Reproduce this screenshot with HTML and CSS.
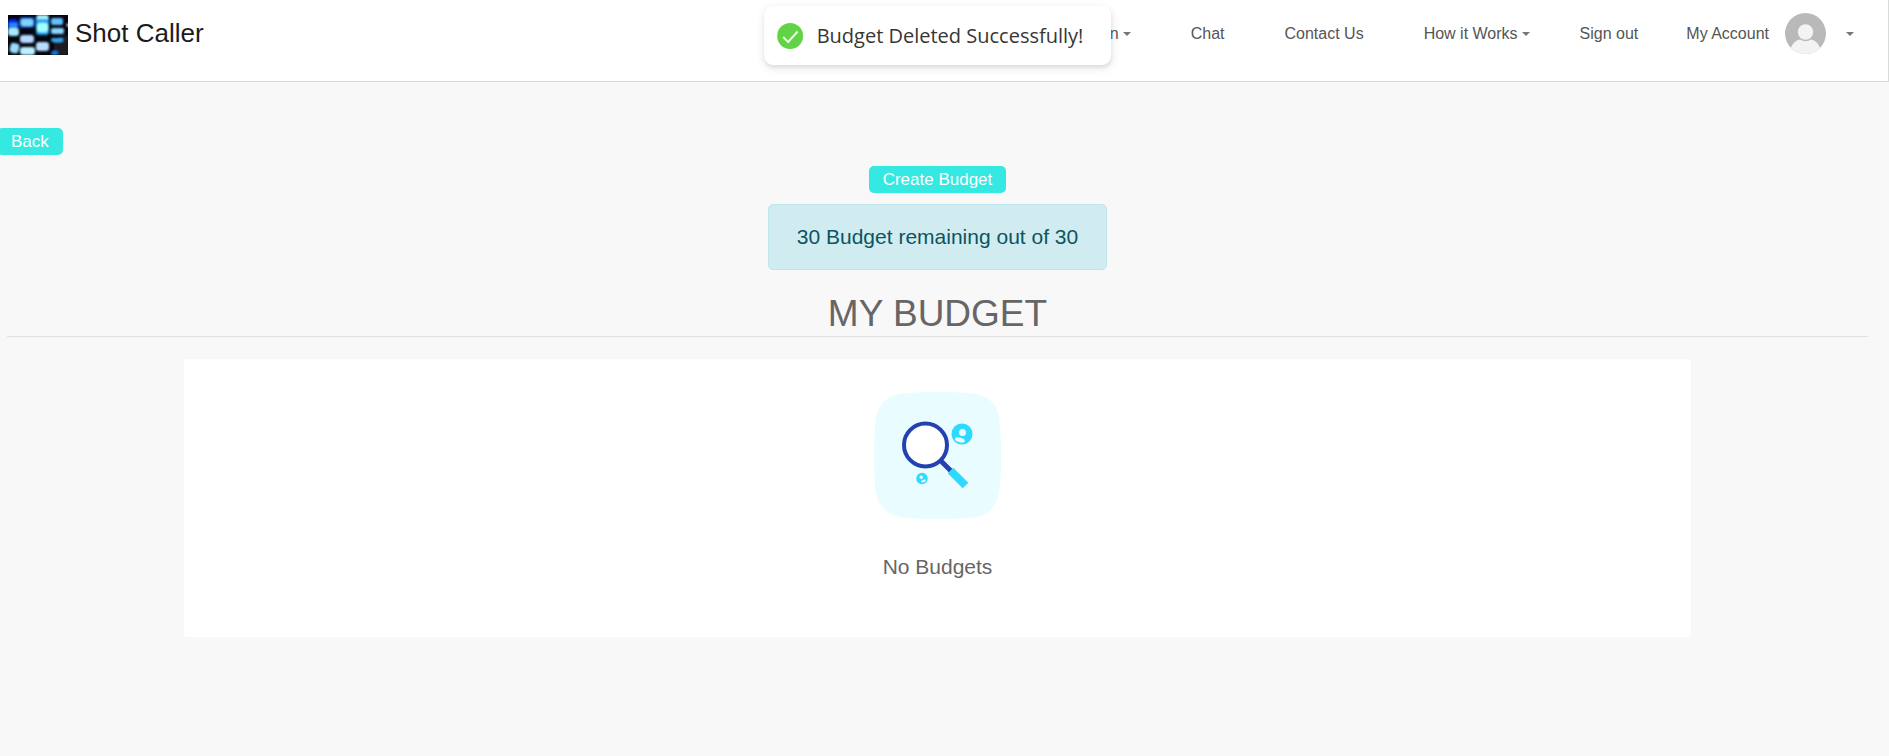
FILE: index.html
```html
<!DOCTYPE html>
<html lang="en">
<head>
<meta charset="utf-8">
<meta name="viewport" content="width=device-width, initial-scale=1">
<title>Shot Caller - My Budget</title>
<link rel="stylesheet" href="styles.css">
</head>
<body>
<header class="navbar">
  <a class="brand" href="#">
    <svg class="brand-logo" viewBox="0 0 60 40" aria-hidden="true">
      <defs><filter id="glow" x="-20%" y="-20%" width="140%" height="140%"><feGaussianBlur stdDeviation="0.9"/></filter></defs>
      <rect width="60" height="40" fill="#03060f"/>
      <g filter="url(#glow)">
        <path d="M46 24l14-4v20H46z" fill="#1c1c24"/>
        <rect x="11" y="2" width="16" height="11" rx="3" fill="#0646b8"/>
        <rect x="0" y="4" width="10" height="12" rx="4" fill="#0a20ee"/>
        <rect x="1" y="8" width="9" height="4" fill="#1d8dff"/>
        <rect x="0" y="13" width="11" height="8" rx="3" fill="#a6ecff"/>
        <rect x="13" y="4" width="12" height="7" rx="2" fill="#7fd4ff"/>
        <rect x="28" y="0" width="13" height="20" rx="3" fill="#1ca6f4"/>
        <rect x="29" y="0" width="11" height="4" fill="#a9f3ff"/>
        <rect x="29" y="8" width="11" height="9" rx="3" fill="#a5ffff"/>
        <rect x="43" y="3" width="12" height="7" rx="2" fill="#62bfff"/>
        <rect x="43" y="13" width="13" height="6" rx="2" fill="#8bd6ff"/>
        <rect x="12" y="20" width="14" height="8" rx="3" fill="#b5d8ff"/>
        <rect x="43" y="23" width="12" height="4" rx="2" fill="#35a8f5"/>
        <rect x="28" y="27" width="13" height="9" rx="3" fill="#b9ddff"/>
        <rect x="2" y="28" width="9" height="10" rx="3" fill="#9bdcff" transform="rotate(12 6 33)"/>
        <rect x="12" y="32" width="15" height="8" rx="3" fill="#bdefff"/>
        <rect x="43" y="36" width="7" height="4" rx="2" fill="#1679e8"/>
        <circle cx="60" cy="10" r="1.5" fill="#fff"/>
      </g>
    </svg>
    <span>Shot Caller</span>
  </a>
  <nav class="menu" aria-label="Main">
    <button class="menu-link caret" type="button">n</button>
    <a class="menu-link" href="#">Chat</a>
    <a class="menu-link" href="#">Contact Us</a>
    <button class="menu-link caret" type="button">How it Works</button>
    <a class="menu-link gap-sign" href="#">Sign out</a>
    <button class="menu-link account caret" type="button">
      <span>My Account</span>
      <svg class="avatar" viewBox="0 0 41 41" aria-hidden="true">
        <defs><clipPath id="disc"><circle cx="20.5" cy="20.5" r="20.5"/></clipPath></defs>
        <g clip-path="url(#disc)">
          <rect width="41" height="41" fill="#b9b9b9"/>
          <path d="M4 41C6 32 10 27 15 26.500Q20.500 30 26 26.500C31 27 35 32 37 41z" fill="#f3f3f3"/>
          <circle cx="20.500" cy="19" r="7.700" fill="#f3f3f3"/>
        </g>
      </svg>
    </button>
  </nav>
</header>

<div class="toast" role="status">
  <svg class="toast-icon" viewBox="0 0 26 26" aria-hidden="true">
    <circle cx="13" cy="13" r="13" fill="#61d345"/>
    <path d="M6 14l5 5 9.500-10.500" fill="none" stroke="#e8fbe3" stroke-width="2"/>
  </svg>
  <span>Budget Deleted Successfully!</span>
</div>

<main class="page">
  <button class="btn btn-back" type="button">Back</button>
  <div class="summary">
    <button class="btn" type="button">Create Budget</button>
    <p class="alert">30 Budget remaining out of 30</p>
    <h1 class="title">MY BUDGET</h1>
    <section class="card">
      <svg class="empty-icon" viewBox="0 0 127 127" aria-hidden="true">
        <path d="M33 1Q63.500-1 94 1Q125 2 126 33Q128 63.500 126 94Q124 125 94 126Q63.500 128 33 126Q3 124 1 94Q-1 63.500 1 33Q3 2 33 1z" fill="#e9fcff"/>
        <path d="M66 68l12 12" stroke="#2341b0" stroke-width="5"/>
        <path d="M76.500 78.500l15 15" stroke="#2cd9ff" stroke-width="8"/>
        <circle cx="51.500" cy="53" r="21.500" fill="#fff" stroke="#2341b0" stroke-width="4"/>
        <circle cx="88" cy="42" r="10.500" fill="#2cd9ff"/>
        <circle cx="88.500" cy="40.500" r="3.500" fill="#e9fcff"/>
        <ellipse cx="86" cy="48" rx="5" ry="2.300" transform="rotate(15 86 48)" fill="#e9fcff"/>
        <circle cx="48" cy="86.500" r="5.700" fill="#2cd9ff"/>
        <circle cx="47.300" cy="85.300" r="1.700" fill="#e9fcff"/>
        <ellipse cx="49.500" cy="89" rx="2.500" ry="1.200" transform="rotate(-20 49.500 89)" fill="#e9fcff"/>
      </svg>
      <p class="empty-text">No Budgets</p>
    </section>
  </div>
</main>
</body>
</html>
```
FILE: styles.css
```css
* { box-sizing: border-box; }

body {
  margin: 0;
  background: #f8f8f8;
  color: #666;
  font-family: "Liberation Sans", Arial, sans-serif;
  font-size: 16px;
  line-height: 24px;
}

button { font: inherit; cursor: pointer; }

.navbar {
  display: flex;
  justify-content: space-between;
  align-items: flex-start;
  padding: 13px 34px 14px 8px;
  min-height: 82px;
  background: #fff;
  border: solid #d9dbdb;
  border-width: 0 1px 1px 0;
}

.brand {
  display: flex;
  align-items: flex-start;
  gap: 7px;
  margin-top: 2px;
  color: #1b1b1b;
  font-size: 26px;
  line-height: 36px;
  text-decoration: none;
}

.brand-logo { width: 60px; height: 40px; }

.menu {
  display: flex;
  align-items: center;
  gap: 60px;
}

.menu-link {
  display: flex;
  align-items: center;
  padding: 0;
  border: 0;
  background: none;
  color: #555;
  text-decoration: none;
}

.gap-sign { margin-left: -10px; }
.account { margin-left: -12px; }

.caret::after {
  content: "";
  margin-left: 4px;
  border: 4px solid transparent;
  border-top-color: #777;
  border-bottom: 0;
}

.avatar { width: 41px; height: 41px; margin: 0 16px; }

.toast {
  position: absolute;
  top: 6px;
  left: 50%;
  transform: translateX(-50%);
  display: flex;
  align-items: center;
  gap: 14px;
  height: 59px;
  padding: 0 28px 0 13px;
  margin-left: -7px;
  border-radius: 9px;
  background: #fff;
  color: #363636;
  box-shadow: 0 3px 10px rgba(0, 0, 0, .1), 0 3px 3px rgba(0, 0, 0, .05);
  font-family: "Segoe UI", "Open Sans", "Noto Sans", sans-serif;
  font-size: 20px;
  white-space: nowrap;
}

.toast-icon { width: 26px; height: 26px; }

.page { padding: 46px 21px 0 7px; }

.btn {
  padding: 0 14px;
  border: 0;
  border-radius: 5px;
  background: #35e8e1;
  color: #fff;
  font-size: 17px;
  line-height: 27px;
}

.btn-back { display: block; margin-left: -10px; }

.summary {
  display: flex;
  flex-direction: column;
  align-items: center;
  margin-top: 11px;
}

.alert {
  margin: 11px 0 24px;
  padding: 16px 28px;
  border: 1px solid #bee5eb;
  border-radius: 5px;
  background: #d1ecf1;
  color: #0c5460;
  font-size: 21px;
  line-height: 32px;
}

.title {
  width: 100%;
  margin: 0;
  padding-bottom: 2px;
  border-bottom: 1px solid #dee2e6;
  font-size: 37px;
  font-weight: 400;
  line-height: 40px;
  text-align: center;
}

.card {
  display: flex;
  flex-direction: column;
  align-items: center;
  width: 81%;
  margin-top: 22px;
  padding: 33px 20px 54px;
  border-radius: 3px;
  background: #fff;
}

.empty-icon { width: 127px; height: 127px; }

.empty-text {
  margin: 32px 0 0;
  font-size: 21px;
  line-height: 32px;
}
```
